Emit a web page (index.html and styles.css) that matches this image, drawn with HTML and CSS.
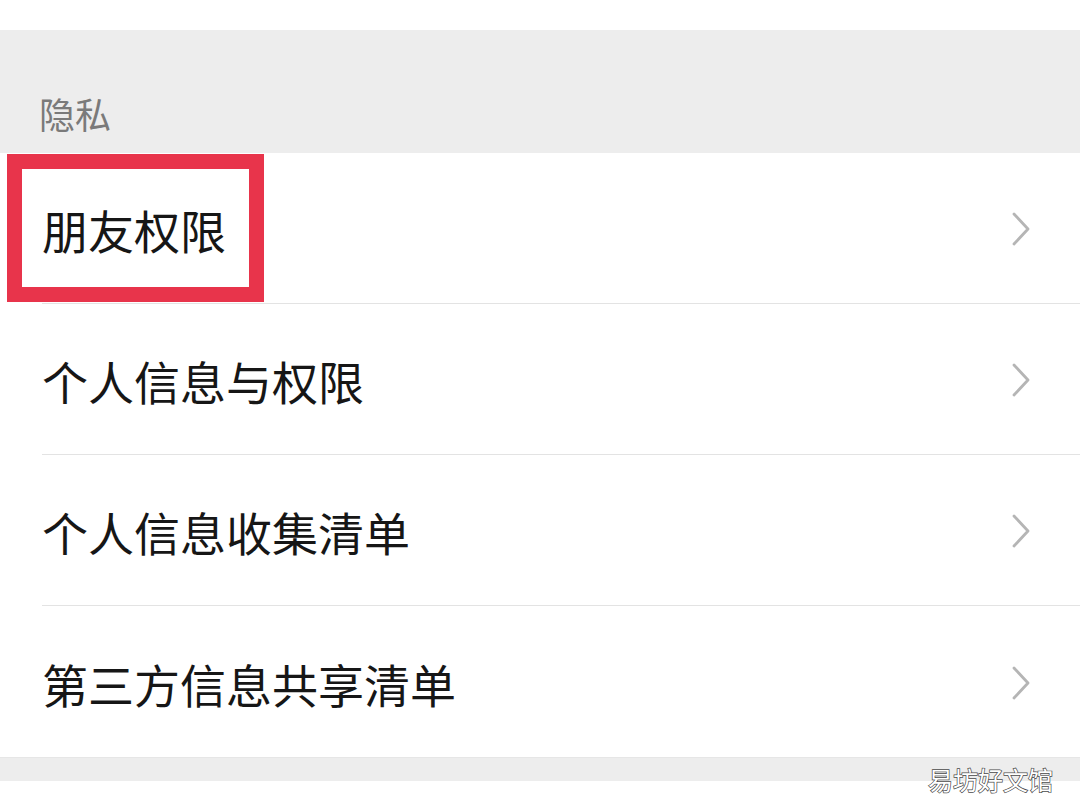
FILE: index.html
```html
<!DOCTYPE html>
<html lang="zh-CN">
<head>
<meta charset="utf-8">
<link rel="stylesheet" href="styles.css">
</head>
<body>
<div class="page">
  <div class="top"></div>
  <div class="section-header"><span class="label">隐私</span></div>
  <div class="list">
    <div class="row">
      <div class="row-inner"><span class="title">朋友权限</span><svg class="chev" viewBox="0 0 20 36" width="20" height="36"><path d="M3 3 L17 18 L3 33" fill="none" stroke="#b5b5b5" stroke-width="2.8" stroke-linecap="round" stroke-linejoin="round"/></svg></div>
      <div class="highlight"></div>
    </div>
    <div class="row">
      <div class="row-inner"><span class="title">个人信息与权限</span><svg class="chev" viewBox="0 0 20 36" width="20" height="36"><path d="M3 3 L17 18 L3 33" fill="none" stroke="#b5b5b5" stroke-width="2.8" stroke-linecap="round" stroke-linejoin="round"/></svg></div>
    </div>
    <div class="row">
      <div class="row-inner"><span class="title">个人信息收集清单</span><svg class="chev" viewBox="0 0 20 36" width="20" height="36"><path d="M3 3 L17 18 L3 33" fill="none" stroke="#b5b5b5" stroke-width="2.8" stroke-linecap="round" stroke-linejoin="round"/></svg></div>
    </div>
    <div class="row last">
      <div class="row-inner"><span class="title">第三方信息共享清单</span><svg class="chev" viewBox="0 0 20 36" width="20" height="36"><path d="M3 3 L17 18 L3 33" fill="none" stroke="#b5b5b5" stroke-width="2.8" stroke-linecap="round" stroke-linejoin="round"/></svg></div>
    </div>
  </div>
  <div class="bottom-band"></div>
  <div class="bottom-white"></div>
  <div class="watermark">易坊好文馆</div>
</div>
</body>
</html>
```
FILE: styles.css
```css
html, body {
  margin: 0;
  padding: 0;
  background: #ffffff;
  font-family: "Noto Sans CJK SC", "Noto Sans", sans-serif;
}
.page {
  position: relative;
  width: 1080px;
  height: 810px;
  overflow: hidden;
  background: #ffffff;
}
.top {
  height: 30px;
  background: #ffffff;
}
.section-header {
  height: 123px;
  background: #ededed;
  display: flex;
  align-items: flex-end;
  padding-left: 39px;
  box-sizing: border-box;
  padding-bottom: 17px;
}
.label {
  font-size: 36px;
  line-height: 46px;
  color: #7a7a7a;
  font-weight: 400;
}
.list {
  background: #ffffff;
}
.row {
  position: relative;
  padding-left: 42px;
}
.row-inner {
  height: 151px;
  border-bottom: 1px solid #e3e3e3;
  box-sizing: border-box;
  display: flex;
  align-items: center;
  justify-content: space-between;
  padding-right: 49px;
}
.row.last .row-inner {
  border-bottom: none;
}
.title {
  font-size: 46px;
  line-height: 60px;
  color: #161616;
  font-weight: 400;
  margin-top: 2px;
}
.chev {
  display: block;
  margin-top: 2px;
}
.highlight {
  position: absolute;
  left: 7px;
  top: 1px;
  width: 257px;
  height: 148px;
  border: 15px solid #e8344b;
  box-sizing: border-box;
}
.bottom-band {
  height: 24px;
  background: #ededed;
  border-top: 1px solid #e6e6e6;
  box-sizing: border-box;
}
.bottom-white {
  height: 29px;
  background: #ffffff;
}
.watermark {
  position: absolute;
  right: 27px;
  bottom: 16px;
  font-size: 25px;
  line-height: 30px;
  color: #ffffff;
  -webkit-text-stroke: 1.4px #4a4a4a;
  paint-order: stroke fill;
}
```
